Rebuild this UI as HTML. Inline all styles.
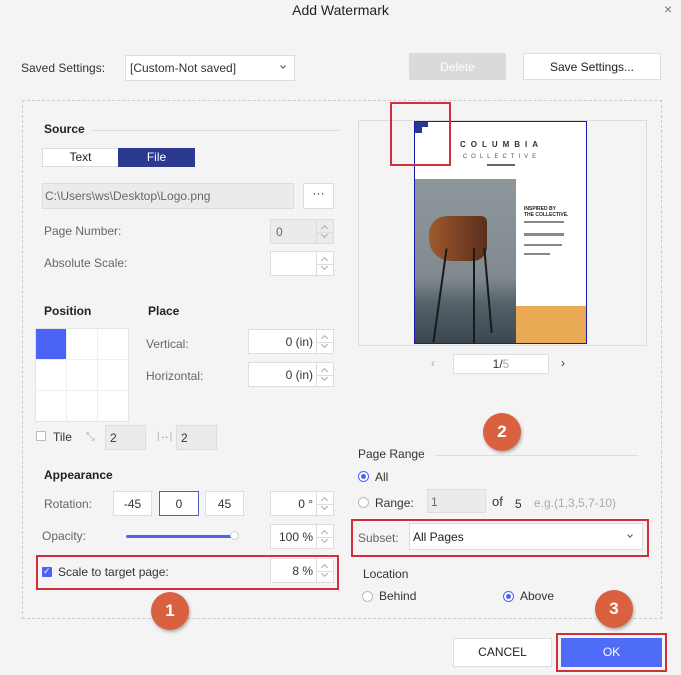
<!DOCTYPE html>
<html><head><meta charset="utf-8"><style>
*{box-sizing:border-box;margin:0;padding:0}
body{width:681px;height:675px;background:#f4f4f4;font-family:"Liberation Sans",sans-serif;font-size:12px;color:#333;position:relative;overflow:hidden}
.a{position:absolute}
.t{position:absolute;white-space:nowrap;line-height:14px}
.g{color:#666}
.b{font-weight:bold;color:#222}
.box{position:absolute;background:#fff;border:1px solid #ddd}
.sp{position:absolute;background:#fff;border:1px solid #ddd}
.sp .v{position:absolute;right:20px;top:50%;transform:translateY(-50%);font-size:12px;color:#333}
.sp .ar{position:absolute;right:0;top:0;width:17px;height:100%;border-left:1px solid #ddd}
.sp .ar:before{content:"";position:absolute;left:0;right:0;top:50%;border-top:1px solid #ddd}
.sp .ar i,.sp .ar b{position:absolute;left:5px;width:5px;height:5px;border-left:1px solid #aaa;border-top:1px solid #aaa}
.sp .ar i{top:6px;transform:rotate(45deg)}
.sp .ar b{bottom:6px;transform:rotate(225deg)}
.red{position:absolute;border:2px solid #d32f3a}
.circ{position:absolute;width:38px;height:38px;border-radius:50%;background:#d9613f;color:#fff;font-weight:bold;font-size:17px;text-align:center;line-height:38px;box-shadow:1px 2px 3px rgba(0,0,0,.3)}
.rad{position:absolute;width:11px;height:11px;border-radius:50%;border:1px solid #bbb;background:#fff}
.rad.on{border-color:#4a63f5}
.rad.on:after{content:"";position:absolute;left:2px;top:2px;width:5px;height:5px;border-radius:50%;background:#4a63f5}
.chev{position:absolute;width:5px;height:5px;border-right:1px solid #555;border-bottom:1px solid #555;transform:rotate(45deg)}
</style></head><body>
<div class="t" style="left:0;width:681px;text-align:center;top:3px;font-size:14px;color:#222">Add Watermark</div>
<div class="t" style="left:664px;top:2px;font-size:14px;color:#777">×</div>

<div class="t" style="left:21px;top:61px">Saved Settings:</div>
<div class="box" style="left:125px;top:55px;width:170px;height:26px"></div>
<div class="t" style="left:130px;top:61px">[Custom-Not saved]</div>
<div class="chev" style="left:281px;top:64px;width:4px;height:4px"></div>
<div class="a" style="left:409px;top:53px;width:97px;height:27px;background:#dadada;border-radius:2px"></div>
<div class="t" style="left:409px;width:97px;text-align:center;top:60px;color:#fff">Delete</div>
<div class="box" style="left:523px;top:53px;width:138px;height:27px"></div>
<div class="t" style="left:523px;width:138px;text-align:center;top:60px;color:#222">Save Settings...</div>

<div class="a" style="left:22px;top:100px;width:640px;height:519px;border:1px dashed #ccc"></div>

<div class="t b" style="left:44px;top:122px">Source</div>
<div class="a" style="left:91px;top:130px;width:249px;border-top:1px solid #ddd"></div>
<div class="box" style="left:42px;top:148px;width:77px;height:19px"></div>
<div class="t" style="left:42px;width:77px;text-align:center;top:150px;color:#222">Text</div>
<div class="a" style="left:118px;top:148px;width:77px;height:19px;background:#2b3990"></div>
<div class="t" style="left:118px;width:77px;text-align:center;top:150px;color:#fff">File</div>
<div class="a" style="left:42px;top:183px;width:252px;height:26px;background:#ebebeb;border:1px solid #ddd"></div>
<div class="t g" style="left:45px;top:189px">C:\Users\ws\Desktop\Logo.png</div>
<div class="box" style="left:303px;top:183px;width:31px;height:26px"></div>
<div class="t" style="left:303px;width:31px;text-align:center;top:186px">···</div>
<div class="t g" style="left:44px;top:224px">Page Number:</div>
<div class="sp" style="left:270px;top:219px;width:64px;height:25px;background:#ebebeb"><span class="v" style="left:5px;right:auto;color:#666">0</span><div class="ar"><i></i><b></b></div></div>
<div class="t g" style="left:44px;top:256px">Absolute Scale:</div>
<div class="sp" style="left:270px;top:251px;width:64px;height:25px"><div class="ar"><i></i><b></b></div></div>

<div class="t b" style="left:44px;top:304px">Position</div>
<div class="t b" style="left:148px;top:304px">Place</div>
<div class="a" style="left:35px;top:328px;width:94px;height:94px;background:#fff;border:1px solid #e4e4e4"></div>
<div class="a" style="left:66px;top:328px;width:1px;height:94px;background:#eee"></div>
<div class="a" style="left:97px;top:328px;width:1px;height:94px;background:#eee"></div>
<div class="a" style="left:35px;top:359px;width:94px;height:1px;background:#eee"></div>
<div class="a" style="left:35px;top:390px;width:94px;height:1px;background:#eee"></div>
<div class="a" style="left:36px;top:329px;width:30px;height:30px;background:#4a63f5"></div>
<div class="t g" style="left:146px;top:337px">Vertical:</div>
<div class="sp" style="left:248px;top:329px;width:86px;height:25px"><span class="v">0 (in)</span><div class="ar"><i></i><b></b></div></div>
<div class="t g" style="left:146px;top:369px">Horizontal:</div>
<div class="sp" style="left:248px;top:362px;width:86px;height:25px"><span class="v">0 (in)</span><div class="ar"><i></i><b></b></div></div>

<div class="a" style="left:36px;top:431px;width:10px;height:10px;border:1px solid #bbb;background:#fff"></div>
<div class="t" style="left:53px;top:430px">Tile</div>
<div class="t" style="left:86px;top:430px;color:#aaa;font-size:11px">⤡</div>
<div class="a" style="left:105px;top:425px;width:41px;height:25px;background:#ebebeb;border:1px solid #ddd"></div>
<div class="t" style="left:110px;top:431px">2</div>
<div class="t" style="left:157px;top:430px;color:#aaa;font-size:10px">|↔|</div>
<div class="a" style="left:176px;top:425px;width:41px;height:25px;background:#ebebeb;border:1px solid #ddd"></div>
<div class="t" style="left:181px;top:431px">2</div>

<div class="t b" style="left:44px;top:468px">Appearance</div>
<div class="t g" style="left:44px;top:497px">Rotation:</div>
<div class="box" style="left:113px;top:491px;width:39px;height:25px"></div>
<div class="t" style="left:113px;width:39px;text-align:center;top:497px">-45</div>
<div class="box" style="left:159px;top:491px;width:40px;height:25px;border-color:#4a63b5"></div>
<div class="t" style="left:159px;width:40px;text-align:center;top:497px">0</div>
<div class="box" style="left:205px;top:491px;width:39px;height:25px"></div>
<div class="t" style="left:205px;width:39px;text-align:center;top:497px">45</div>
<div class="sp" style="left:270px;top:491px;width:64px;height:25px"><span class="v">0 °</span><div class="ar"><i></i><b></b></div></div>
<div class="t g" style="left:42px;top:529px">Opacity:</div>
<div class="a" style="left:126px;top:535px;width:108px;height:3px;background:#4a63f5;border-radius:2px"></div>
<div class="a" style="left:230px;top:531px;width:9px;height:9px;border-radius:50%;background:#fff;border:1px solid #ccc"></div>
<div class="sp" style="left:270px;top:524px;width:64px;height:25px"><span class="v">100 %</span><div class="ar"><i></i><b></b></div></div>
<div class="a" style="left:42px;top:567px;width:10px;height:10px;background:#4a63f5;border-radius:1px"></div>
<div class="t" style="left:43px;top:564px;color:#fff;font-size:9px">✓</div>
<div class="t" style="left:58px;top:565px">Scale to target page:</div>
<div class="sp" style="left:270px;top:558px;width:64px;height:25px"><span class="v">8 %</span><div class="ar"><i></i><b></b></div></div>
<div class="red" style="left:36px;top:555px;width:303px;height:35px"></div>
<div class="circ" style="left:151px;top:592px">1</div>

<div class="a" style="left:358px;top:120px;width:289px;height:226px;border:1px solid #ddd;background:#f4f4f4"></div>
<div class="a" style="left:414px;top:121px;width:173px;height:223px;background:#fff;border:1px solid #1a1aa8;overflow:hidden">
  <div class="a" style="left:0;top:0;width:13px;height:5px;background:#2b3990"></div>
  <div class="a" style="left:0;top:5px;width:7px;height:6px;background:#2b3990"></div>
  <div class="t" style="left:0;width:173px;text-align:center;top:16px;font-size:8px;font-weight:bold;letter-spacing:5px;color:#333">COLUMBIA</div>
  <div class="t" style="left:0;width:173px;text-align:center;top:28px;font-size:6px;letter-spacing:4px;color:#555">COLLECTIVE</div>
  <div class="a" style="left:72px;top:42px;width:28px;height:2px;background:#666"></div>
  <div class="a" style="left:0;top:57px;width:101px;height:165px;background:linear-gradient(#8e979c 0%,#7f898f 60%,#56626a 75%,#3a4750 100%)"></div>
  <div class="a" style="left:14px;top:94px;width:58px;height:45px;background:linear-gradient(90deg,#a0592e,#5a2e1c);border-radius:18px 6px 14px 22px"></div>
  <div class="a" style="left:24px;top:126px;width:2px;height:95px;background:#1a1a1a;transform:rotate(8deg)"></div>
  <div class="a" style="left:58px;top:126px;width:2px;height:95px;background:#1a1a1a"></div>
  <div class="a" style="left:72px;top:126px;width:2px;height:85px;background:#1a1a1a;transform:rotate(-5deg)"></div>
  <div class="a" style="left:109px;top:84px;font-size:5px;font-weight:bold;line-height:6px;color:#222">INSPIRED BY<br>THE COLLECTIVE.</div>
  <div class="a" style="left:109px;top:99px;width:40px;height:2px;background:#888"></div>
  <div class="a" style="left:109px;top:111px;width:40px;height:3px;background:#888"></div>
  <div class="a" style="left:109px;top:122px;width:38px;height:2px;background:#888"></div>
  <div class="a" style="left:109px;top:131px;width:26px;height:2px;background:#888"></div>
  <div class="a" style="left:101px;top:184px;width:72px;height:38px;background:#eaaa55"></div>
</div>
<div class="red" style="left:390px;top:102px;width:61px;height:64px"></div>
<div class="t" style="left:431px;top:356px;color:#aaa">‹</div>
<div class="box" style="left:453px;top:354px;width:96px;height:20px"></div>
<div class="t" style="left:453px;width:96px;text-align:center;top:357px">1/<span style="color:#aaa">5</span></div>
<div class="t" style="left:561px;top:356px">›</div>
<div class="circ" style="left:483px;top:413px">2</div>

<div class="t" style="left:358px;top:447px">Page Range</div>
<div class="a" style="left:435px;top:455px;width:203px;border-top:1px solid #ddd"></div>
<div class="rad on" style="left:358px;top:471px"></div>
<div class="t" style="left:375px;top:470px">All</div>
<div class="rad" style="left:358px;top:497px"></div>
<div class="t" style="left:375px;top:496px">Range:</div>
<div class="a" style="left:427px;top:489px;width:59px;height:24px;background:#ebebeb;border:1px solid #ddd"></div>
<div class="t g" style="left:431px;top:495px">1</div>
<div class="t" style="left:492px;top:495px;font-size:13px">of</div>
<div class="t" style="left:515px;top:497px">5</div>
<div class="t" style="left:534px;top:496px;color:#aaa">e.g.(1,3,5,7-10)</div>
<div class="red" style="left:351px;top:519px;width:298px;height:38px"></div>
<div class="t g" style="left:358px;top:531px">Subset:</div>
<div class="box" style="left:409px;top:523px;width:234px;height:27px"></div>
<div class="t" style="left:413px;top:530px;color:#222">All Pages</div>
<div class="chev" style="left:628px;top:533px;width:4px;height:4px"></div>
<div class="t" style="left:363px;top:567px">Location</div>
<div class="rad" style="left:362px;top:591px"></div>
<div class="t" style="left:379px;top:589px">Behind</div>
<div class="rad on" style="left:503px;top:591px"></div>
<div class="t" style="left:520px;top:589px">Above</div>
<div class="circ" style="left:595px;top:590px">3</div>

<div class="box" style="left:453px;top:638px;width:99px;height:29px"></div>
<div class="t" style="left:453px;width:99px;text-align:center;top:645px;color:#222">CANCEL</div>
<div class="red" style="left:556px;top:633px;width:111px;height:39px"></div>
<div class="a" style="left:561px;top:638px;width:101px;height:29px;background:#4e6cf7"></div>
<div class="t" style="left:561px;width:101px;text-align:center;top:645px;color:#fff">OK</div>
</body></html>
